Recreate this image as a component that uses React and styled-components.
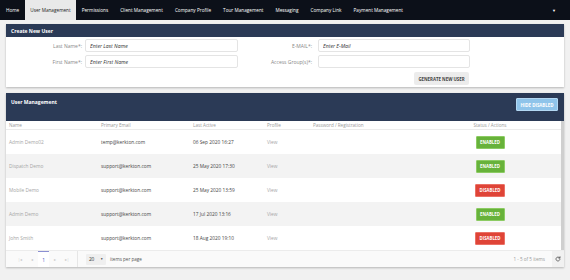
import React from "react";
import styled, { createGlobalStyle } from "styled-components";

const GlobalStyle = createGlobalStyle`
  html, body {
    margin: 0;
    padding: 0;
    background: #f1f1f1;
    font-family: "Open Sans", "Liberation Sans", sans-serif;
  }
  * { box-sizing: border-box; }
`;

const navItems = [
  "Home",
  "User Management",
  "Permissions",
  "Client Management",
  "Company Profile",
  "Tour Management",
  "Messaging",
  "Company Link",
  "Payment Management",
];

const users = [
  { name: "Admin Demo02", email: "temp@kerkton.com", last: "06 Sep 2020 16:27", enabled: true },
  { name: "Dispatch Demo", email: "support@kerkton.com", last: "25 May 2020 17:30", enabled: true },
  { name: "Mobile Demo", email: "support@kerkton.com", last: "25 May 2020 13:59", enabled: false },
  { name: "Admin Demo", email: "support@kerkton.com", last: "17 Jul 2020 13:16", enabled: true },
  { name: "John Smith", email: "support@kerkton.com", last: "18 Aug 2020 19:10", enabled: false },
];

export default function App() {
  return (
    <Page>
      <GlobalStyle />
      <Nav>
        {navItems.map((item) => (
          <NavItem key={item} active={item === "User Management"}>{item}</NavItem>
        ))}
        <NavSpacer />
        <NavCaret>▼</NavCaret>
      </Nav>

      <Content>
        <Card>
          <CardHeader>Create New User</CardHeader>
          <Form>
            <Label>Last Name*:</Label>
            <Input placeholder="Enter Last Name" />
            <Label wide>E-MAIL*:</Label>
            <Input placeholder="Enter E-Mail" />
            <Label>First Name*:</Label>
            <Input placeholder="Enter First Name" />
            <Label wide>Access Group(s)*:</Label>
            <Input />
            <GenerateButton>GENERATE NEW USER</GenerateButton>
          </Form>
        </Card>

        <Card>
          <TallHeader>
            <span>User Management</span>
            <HideButton>HIDE DISABLED</HideButton>
          </TallHeader>
          <TableWrap>
            <Table>
              <HeadRow>
                <Cell>Name</Cell>
                <Cell>Primary Email</Cell>
                <Cell>Last Active</Cell>
                <Cell>Profile</Cell>
                <Cell>Password / Registration</Cell>
                <Cell center>Status / Actions</Cell>
              </HeadRow>
              {users.map((u, i) => (
                <Row key={u.name} alt={i % 2 === 1}>
                  <Cell muted>{u.name}</Cell>
                  <Cell>{u.email}</Cell>
                  <Cell>{u.last}</Cell>
                  <Cell muted>View</Cell>
                  <Cell />
                  <Cell center>
                    <StatusButton enabled={u.enabled}>{u.enabled ? "ENABLED" : "DISABLED"}</StatusButton>
                  </Cell>
                </Row>
              ))}
            </Table>
            <Scrollbar />
          </TableWrap>
          <Pager>
            <PagerNav>
              <PageArrow>|◂</PageArrow>
              <PageArrow>◂</PageArrow>
              <PageNum>1</PageNum>
              <PageArrow>▸</PageArrow>
              <PageArrow>▸|</PageArrow>
            </PagerNav>
            <PageSize>20 <small>▼</small></PageSize>
            <PagerText>items per page</PagerText>
            <NavSpacer />
            <PagerInfo>1 - 5 of 5 items</PagerInfo>
            <Refresh>
              <svg width="6" height="6" viewBox="0 0 24 24" fill="none" stroke="#444" strokeWidth="3" strokeLinecap="round">
                <path d="M20 12a8 8 0 1 1-2.34-5.66" />
                <path d="M20 3v5h-5" />
              </svg>
            </Refresh>
          </Pager>
        </Card>
      </Content>
    </Page>
  );
}

const Page = styled.div`
  width: 570px;
  min-height: 280px;
  background: #f1f1f1;
`;

const Nav = styled.div`
  height: 20px;
  background: #0c1019;
  display: flex;
  align-items: stretch;
  padding-left: 0;
  padding-right: 14px;
`;

const NavItem = styled.div`
  display: flex;
  align-items: center;
  font-size: 4.7px;
  font-weight: 500;
  color: ${(p) => (p.active ? "#222" : "#fff")};
  background: ${(p) => (p.active ? "#e9e9e9" : "transparent")};
  padding: ${(p) => (p.active ? "0 5px" : "0 6px")};
`;

const NavSpacer = styled.div`
  flex: 1;
`;

const NavCaret = styled.div`
  color: #fff;
  font-size: 4px;
  display: flex;
  align-items: center;
`;

const Content = styled.div`
  padding: 4px 6px 0;
  display: flex;
  flex-direction: column;
  gap: 6px;
`;

const Card = styled.div`
  background: #fff;
  box-shadow: 0 1px 2px rgba(0, 0, 0, 0.25);
  display: flex;
  flex-direction: column;
`;

const CardHeader = styled.div`
  height: 13px;
  background: #2b3a56;
  color: #fff;
  font-size: 5px;
  font-weight: 700;
  padding: 0 5px;
  display: flex;
  align-items: center;
`;

const Form = styled.div`
  display: grid;
  grid-template-columns: 79px 153px 80px 152px;
  grid-auto-rows: 13px;
  row-gap: 3px;
  padding: 2px 0 3px;
  & > :last-child { margin-top: 1px; }
`;

const Label = styled.div`
  font-size: 5px;
  color: #888;
  text-align: right;
  padding-right: ${(p) => (p.wide ? "6px" : "3px")};
  display: flex;
  align-items: center;
  justify-content: flex-end;
`;

const Input = styled.input`
  height: 13px;
  border: 1px solid #e4e4e4;
  border-radius: 2px;
  background: #fff;
  padding: 0 4px;
  font-family: inherit;
  font-size: 5.2px;
  outline: none;
  &::placeholder {
    color: #333;
    font-style: italic;
  }
`;

const GenerateButton = styled.div`
  grid-column: 4;
  justify-self: end;
  margin-right: 1px;
  width: 55px;
  height: 13px;
  background: #ececec;
  border-radius: 2px;
  color: #444;
  font-size: 4.4px;
  font-weight: 700;
  display: flex;
  align-items: center;
  justify-content: center;
`;

const TallHeader = styled.div`
  height: 28px;
  background: #2b3a56;
  color: #fff;
  font-size: 5px;
  font-weight: 700;
  padding: 5px 6px 0 5px;
  display: flex;
  justify-content: space-between;
  align-items: flex-start;
  span { padding-top: 1px; }
`;

const HideButton = styled.div`
  width: 42px;
  height: 13px;
  background: #8fc4ea;
  border: 1px solid #b3d8f3;
  border-radius: 1px;
  color: #fff;
  font-size: 4.4px;
  font-weight: 700;
  display: flex;
  align-items: center;
  justify-content: center;
`;

const TableWrap = styled.div`
  display: flex;
`;

const Table = styled.div`
  flex: 1;
  display: flex;
  flex-direction: column;
`;

const Scrollbar = styled.div`
  width: 3px;
  background: #cfcfcf;
`;

const rowGrid = `
  display: grid;
  grid-template-columns: 92px 92px 74px 46px 137px 80px 1fr;
  padding-left: 3px;
  align-items: center;
`;

const HeadRow = styled.div`
  ${rowGrid}
  height: 9px;
  border-bottom: 1px solid #ececec;
  font-size: 4.6px;
  color: #999;
`;

const Row = styled.div`
  ${rowGrid}
  height: 24px;
  background: ${(p) => (p.alt ? "#f3f3f3" : "#fff")};
  font-size: 4.8px;
  color: #444;
`;

const Cell = styled.div`
  color: ${(p) => (p.muted ? "#a5a5a5" : "inherit")};
  text-align: ${(p) => (p.center ? "center" : "left")};
  display: flex;
  justify-content: ${(p) => (p.center ? "center" : "flex-start")};
  white-space: nowrap;
`;

const StatusButton = styled.div`
  width: ${(p) => (p.enabled ? "29px" : "30px")};
  height: 13px;
  border-radius: 1px;
  background: ${(p) => (p.enabled ? "#67b23a" : "#df4437")};
  border: 1px solid ${(p) => (p.enabled ? "#8ccb63" : "#ea7065")};
  color: #fff;
  font-size: 4.3px;
  font-weight: 700;
  display: flex;
  align-items: center;
  justify-content: center;
`;

const Pager = styled.div`
  height: 17px;
  background: #fafafa;
  border-top: 1px solid #ececec;
  display: flex;
  align-items: center;
  padding-left: 8px;
  font-size: 4.6px;
`;

const PagerNav = styled.div`
  display: flex;
  align-items: stretch;
  height: 100%;
  padding-right: 4px;
  border-right: 1px solid #e6e6e6;
  margin-right: 8px;
`;

const PageArrow = styled.div`
  width: 12px;
  display: flex;
  align-items: center;
  justify-content: center;
  color: #c6c6c6;
  font-size: 3.6px;
`;

const PageNum = styled.div`
  width: 11px;
  display: flex;
  align-items: center;
  justify-content: center;
  background: #fff;
  border-top: 1px solid #8b8fd2;
  color: #4a59c7;
  font-size: 4.8px;
`;

const PageSize = styled.div`
  width: 20px;
  height: 11px;
  background: #efefef;
  border-radius: 1px;
  display: flex;
  align-items: center;
  justify-content: space-around;
  color: #333;
  font-size: 4.8px;
  small { font-size: 3px; }
`;

const PagerText = styled.div`
  margin-left: 4px;
  color: #555;
`;

const PagerInfo = styled.div`
  color: #999;
  margin-right: 7px;
`;

const Refresh = styled.div`
  width: 12px;
  height: 100%;
  background: #f1f1f1;
  display: flex;
  align-items: center;
  justify-content: center;
`;
